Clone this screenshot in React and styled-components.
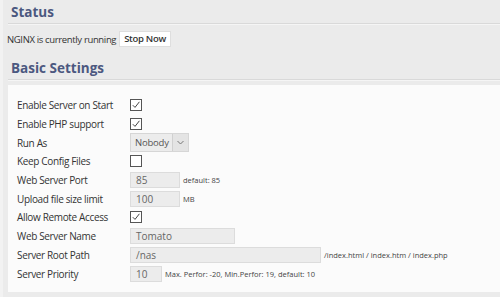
import React from "react";
import styled, { createGlobalStyle } from "styled-components";

const GlobalStyle = createGlobalStyle`
  html, body {
    margin: 0;
    padding: 0;
    background: #ebebeb;
    font-family: "Open Sans", "DejaVu Sans", sans-serif;
    color: #333;
  }
`;

const Page = styled.div`
  width: 500px;
  height: 297px;
  overflow: hidden;
  padding-left: 5px;
  box-sizing: border-box;
  border-left: 3px solid #f2f2f2;
`;

const Heading = styled.h2`
  margin: 0;
  padding: ${(p) => (p.first ? "3px" : "10px")} 0 2px 3px;
  font-size: 13.5px;
  font-weight: 700;
  color: #4b5880;
  border-bottom: 1px solid #d9d9d9;
  box-shadow: 0 1px 0 #f5f5f5;
  line-height: 18px;
`;

const StatusRow = styled.div`
  display: flex;
  align-items: center;
  gap: 3px;
  height: 16px;
  margin: 7px 0 2px -1px;
  font-size: 9.5px;
  letter-spacing: -0.35px;
`;

const Button = styled.button`
  font-family: inherit;
  font-size: 9.5px;
  font-weight: 600;
  letter-spacing: -0.3px;
  color: #333;
  background: #fff;
  border: 1px solid #dedede;
  padding: 0 4px;
  height: 16px;
  line-height: 14px;
  cursor: pointer;
`;

const Panel = styled.div`
  background: #fbfbfb;
  margin-top: 5px;
  padding: 11px 0 9px 9px;
  display: flex;
  flex-direction: column;
`;

const Row = styled.div`
  display: flex;
  align-items: center;
  height: 18.7px;
  font-size: 10px;
  letter-spacing: -0.35px;
  color: #333;
`;

const Label = styled.div`
  width: 113px;
  flex-shrink: 0;
`;

const Check = styled.span`
  width: 10px;
  height: 10px;
  border: 1px solid #555;
  background: #fff;
  display: flex;
  align-items: center;
  justify-content: center;
`;

const Field = styled.div`
  width: ${(p) => p.w}px;
  height: 16px;
  box-sizing: border-box;
  background: #ececec;
  border: 1px solid #dcdcdc;
  color: #666;
  font-size: 10px;
  letter-spacing: 0;
  padding-left: 5px;
  display: flex;
  align-items: center;
`;

const Hint = styled.span`
  font-size: 7.5px;
  letter-spacing: 0;
  color: #444;
  margin-left: 3px;
`;

const Select = styled.div`
  display: flex;
  height: 17px;
  border: 1px solid #d6d6d6;
  background: #ececec;
  color: #555;
  font-size: 9.5px;
  letter-spacing: -0.2px;
`;

const SelectText = styled.div`
  flex: none;
  padding: 0 3px 0 4px;
  display: flex;
  align-items: center;
  white-space: nowrap;
`;

const Arrow = styled.div`
  flex: none;
  width: 15px;
  border-left: 1px solid #d0d0d0;
  background: #e4e4e4;
  display: flex;
  align-items: center;
  justify-content: center;
`;

const Checkbox = ({ checked }) => (
  <Check>
    {checked && (
      <svg width="8" height="8" viewBox="0 0 8 8">
        <path d="M0.8 4.2 L3 6.4 L7.4 0.8" fill="none" stroke="#444" strokeWidth="1" />
      </svg>
    )}
  </Check>
);

const rows = [
  { label: "Enable Server on Start", type: "check", checked: true },
  { label: "Enable PHP support", type: "check", checked: true },
  { label: "Run As", type: "select", value: "Nobody" },
  { label: "Keep Config Files", type: "check", checked: false },
  { label: "Web Server Port", type: "field", value: "85", w: 50, hint: "default: 85" },
  { label: "Upload file size limit", type: "field", value: "100", w: 50, hint: "MB" },
  { label: "Allow Remote Access", type: "check", checked: true },
  { label: "Web Server Name", type: "field", value: "Tomato", w: 105 },
  { label: "Server Root Path", type: "field", value: "/nas", w: 191, hint: "/index.html / index.htm / index.php" },
  { label: "Server Priority", type: "field", value: "10", w: 32, hint: "Max. Perfor: -20, Min.Perfor: 19, default: 10" },
];

export default function App() {
  return (
    <>
      <GlobalStyle />
      <Page>
        <Heading first>Status</Heading>
        <StatusRow>
          NGINX is currently running <Button>Stop Now</Button>
        </StatusRow>
        <Heading>Basic Settings</Heading>
        <Panel>
          {rows.map((r) => (
            <Row key={r.label}>
              <Label>{r.label}</Label>
              {r.type === "check" && <Checkbox checked={r.checked} />}
              {r.type === "select" && (
                <Select>
                  <SelectText>{r.value}</SelectText>
                  <Arrow>
                    <svg width="7" height="5" viewBox="0 0 7 5">
                      <path d="M0.5 1 L3.5 4 L6.5 1" fill="none" stroke="#777" strokeWidth="1" />
                    </svg>
                  </Arrow>
                </Select>
              )}
              {r.type === "field" && <Field w={r.w}>{r.value}</Field>}
              {r.hint && <Hint>{r.hint}</Hint>}
            </Row>
          ))}
        </Panel>
      </Page>
    </>
  );
}
